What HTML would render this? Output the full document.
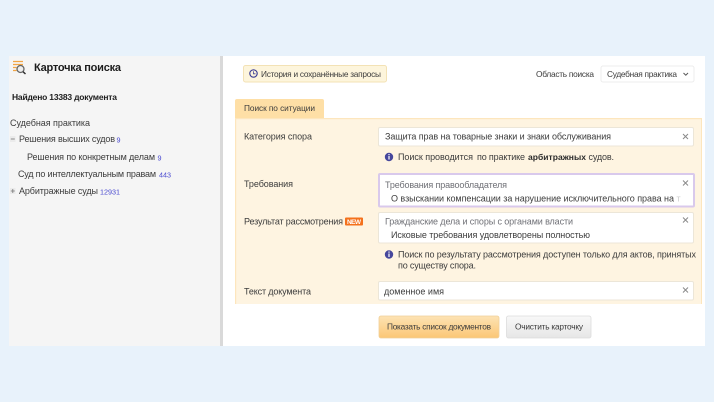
<!DOCTYPE html>
<html lang="ru"><head><meta charset="utf-8"><title>Карточка поиска</title>
<style>
html,body{margin:0;padding:0;width:714px;height:402px;overflow:hidden;background:#e8f2fb}
svg{display:block;filter:blur(.3px)}
text{font-family:"Liberation Sans","DejaVu Sans",sans-serif;font-size:9px;fill:#3c3c3c}
.s{font-size:8.3px}
.b{font-weight:bold;fill:#1c1c1c}
.g{fill:#6f7076}
.n{fill:#4a4ad0;font-size:7.2px}
.x{stroke:#8a8a8a;stroke-width:1;fill:none}
</style></head><body>
<svg width="714" height="402" viewBox="0 0 714 402" xmlns="http://www.w3.org/2000/svg">
<defs>
<linearGradient id="o" x1="0" y1="0" x2="0" y2="1"><stop offset="0" stop-color="#fde3b4"/><stop offset="1" stop-color="#fbc675"/></linearGradient>
<linearGradient id="c" x1="0" y1="0" x2="0" y2="1"><stop offset="0" stop-color="#f8f8f8"/><stop offset="1" stop-color="#e6e6e6"/></linearGradient>
</defs>
<rect width="714" height="402" fill="#e8f2fb"/>
<rect x="9" y="56" width="211" height="290" fill="#f5f5f5"/>
<rect x="220" y="56" width="3" height="290" fill="#d9d9d9"/>
<rect x="223" y="56" width="482" height="290" fill="#fff"/>

<!-- logo -->
<g fill="none">
<path d="M13 61.500H23M13 64.500H23M13 67.500H16.500M13 70.500H16.500" stroke="#f2a544" stroke-width="1.300"/>
<circle cx="20.500" cy="69" r="3.500" stroke="#666" stroke-width="1.300" fill="#eee"/>
<path d="M23 71.700L25.500 74" stroke="#333" stroke-width="1.500"/>
</g>
<text x="34" y="71" class="b" style="font-size:11px" textLength="87">Карточка поиска</text>
<text x="12" y="100" class="b" style="font-size:8.500px" textLength="105">Найдено 13383 документа</text>
<text x="10" y="126" textLength="80">Судебная практика</text>

<rect x="10" y="136" width="5.500" height="6" fill="#ebebeb"/><path d="M10.800 139H14.800" stroke="#777" stroke-width=".8"/>
<text x="19" y="142" textLength="96">Решения высших судов</text><text x="116.500" y="142.500" class="n">9</text>
<text x="27" y="160" textLength="128">Решения по конкретным делам</text><text x="157.500" y="160.500" class="n">9</text>
<text x="18" y="177" textLength="138">Суд по интеллектуальным правам</text><text x="159" y="177.500" class="n">443</text>
<rect x="10" y="188" width="5.500" height="6" fill="#ebebeb"/><path d="M10.800 191H14.800M12.800 189V193" stroke="#777" stroke-width=".8"/>
<text x="19" y="194" textLength="79">Арбитражные суды</text><text x="100" y="194.500" class="n">12931</text>

<!-- top row -->
<rect x="243.500" y="65.500" width="143" height="16.500" rx="2" fill="#fdf5dc" stroke="#f3e2b5"/>
<circle cx="253.500" cy="73.500" r="3.700" fill="none" stroke="#3f4196" stroke-width="1.200"/>
<path d="M253.500 71.300V73.800H255.500" fill="none" stroke="#3f4196" stroke-width=".8"/>
<text x="261" y="77" class="s" textLength="120">История и сохранённые запросы</text>
<text x="536" y="77" class="s" textLength="58">Область поиска</text>
<rect x="601" y="66" width="93" height="16" rx="2" fill="#fff" stroke="#ececec"/>
<text x="607" y="77" class="s" textLength="70">Судебная практика</text>
<path d="M683.500 73L685.800 75.200L688 73" fill="none" stroke="#555" stroke-width="1"/>

<!-- tab and panel -->
<path d="M235 118V101a2 2 0 0 1 2-2H322a2 2 0 0 1 2 2V118Z" fill="#fedfa6"/>
<text x="244" y="111" class="s" textLength="71">Поиск по ситуации</text>
<rect x="235" y="118" width="467" height="186" fill="#fef4e1"/>
<rect x="235" y="118" width="467" height="1.200" fill="#fde6bd"/>
<rect x="235" y="118" width="1.200" height="186" fill="#fde6bd"/>
<rect x="701" y="118" width="1" height="186" fill="#fde6bd"/>

<text x="244" y="139.500" textLength="68">Категория спора</text>
<rect x="378.500" y="127.500" width="315" height="18.500" rx="1.500" fill="#fff" stroke="#ece6d8"/>
<text x="385" y="139.500" textLength="226">Защита прав на товарные знаки и знаки обслуживания</text>
<path class="x" d="M683 134L688 139M688 134L683 139"/>

<circle cx="389" cy="157" r="4.200" fill="#46479c"/><rect x="388.400" y="156" width="1.200" height="3.500" fill="#fff"/><rect x="388.400" y="154" width="1.200" height="1.200" fill="#fff"/>
<text x="398" y="160" textLength="75">Поиск проводится</text>
<text x="477" y="160" textLength="48">по практике</text>
<text x="528" y="160" class="b" style="fill:#2b2b2b;font-size:8.500px" textLength="58">арбитражных</text>
<text x="588.500" y="160" textLength="25.500">судов.</text>

<text x="244" y="187" textLength="49">Требования</text>
<rect x="379" y="174" width="315" height="32.500" rx="1" fill="#fff" stroke="#d9c9ec" stroke-width="2"/>
<text x="385" y="188" class="g" textLength="122">Требования правообладателя</text>
<text x="391" y="201.500" textLength="283">О взыскании компенсации за нарушение исключительного права на</text>
<text x="676.500" y="201.500" style="fill:#cfcfcf">т</text>
<path class="x" d="M683 180.500L688 185.500M688 180.500L683 185.500"/>

<text x="244" y="224.500" textLength="99">Результат рассмотрения</text>
<rect x="345" y="217.500" width="18" height="8" rx="1" fill="#f4711c"/>
<text x="347" y="224" style="font-size:6.500px;font-weight:bold;fill:#fff" textLength="14">NEW</text>
<rect x="378.500" y="212.500" width="315" height="30.500" rx="1.500" fill="#fff" stroke="#ece6d8"/>
<text x="385" y="224.500" class="g" textLength="188">Гражданские дела и споры с органами власти</text>
<text x="391" y="238" textLength="199">Исковые требования удовлетворены полностью</text>
<path class="x" d="M683 217.500L688 222.500M688 217.500L683 222.500"/>

<circle cx="389" cy="254.500" r="4.200" fill="#46479c"/><rect x="388.400" y="253.500" width="1.200" height="3.500" fill="#fff"/><rect x="388.400" y="251.500" width="1.200" height="1.200" fill="#fff"/>
<text x="398" y="257.500" textLength="298">Поиск по результату рассмотрения доступен только для актов, принятых</text>
<text x="398" y="268.500" textLength="78">по существу спора.</text>

<text x="244" y="294.500" textLength="67">Текст документа</text>
<rect x="378.500" y="281.500" width="315" height="18.500" rx="1.500" fill="#fff" stroke="#ece6d8"/>
<text x="384" y="294.500" textLength="60">доменное имя</text>
<path class="x" d="M683 287.500L688 292.500M688 287.500L683 292.500"/>

<!-- buttons -->
<rect x="379" y="316" width="120" height="22" rx="2" fill="url(#o)" stroke="#f0d09a" stroke-width=".8"/>
<text x="387" y="329.500" class="s" textLength="104">Показать список документов</text>
<rect x="506.500" y="316" width="84.500" height="22" rx="2" fill="url(#c)" stroke="#dcdcdc" stroke-width=".8"/>
<text x="515" y="329.500" class="s" textLength="68">Очистить карточку</text>
</svg>
</body></html>
